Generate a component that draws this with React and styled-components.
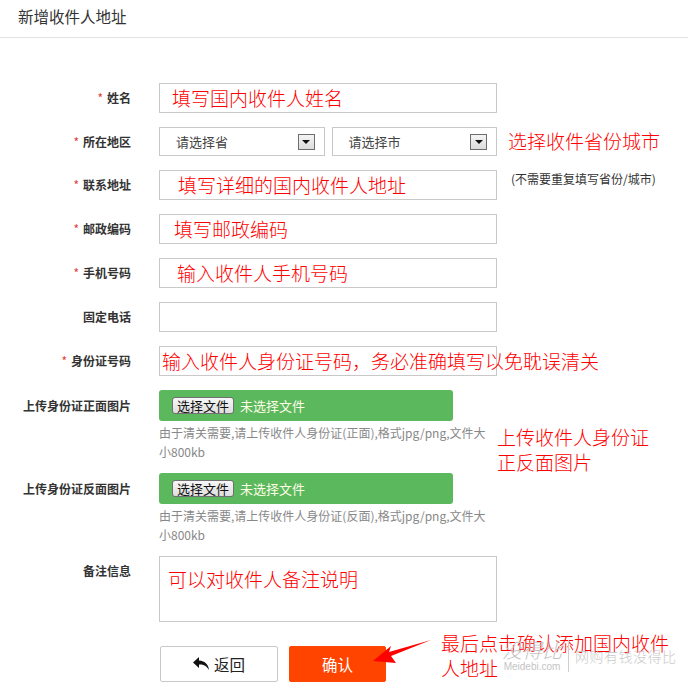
import React from "react";
import styled, { createGlobalStyle } from "styled-components";

const Global = createGlobalStyle`
  html, body { margin: 0; padding: 0; background: #fff; }
  body { font-family: "Noto Sans CJK SC", "Noto Sans", sans-serif; color: #333; }
  * { box-sizing: border-box; }
`;

const Page = styled.div`
  position: relative;
  width: 688px;
  height: 693px;
  overflow: hidden;
`;

const Header = styled.div`
  height: 38px;
  border-bottom: 1px solid #e3e3e3;
  padding-left: 18px;
  font-size: 15.5px;
  line-height: 32px;
  color: #333;
`;

const Form = styled.div`
  padding-top: 45px;
`;

const Row = styled.div`
  display: grid;
  grid-template-columns: 131px 338px;
  column-gap: 28px;
  margin-bottom: ${(p) => p.$gap ?? 14}px;
`;

const Label = styled.div`
  text-align: right;
  font-size: 12px;
  font-weight: 700;
  line-height: ${(p) => p.$lh ?? 30}px;
  color: #333;
  white-space: nowrap;
`;

const Star = styled.span`
  color: #e4393c;
  font-weight: 400;
  margin-right: 4px;
`;

const Field = styled.div`
  height: ${(p) => p.$h ?? 30}px;
  border: 1px solid #c9c9c9;
  padding-left: ${(p) => p.$indent ?? 12}px;
  padding-top: ${(p) => p.$top ?? 0}px;
  font-size: 19px;
  font-weight: 300;
  line-height: ${(p) => p.$lh ?? 28}px;
  color: #ff0000;
  white-space: nowrap;
  overflow: visible;
`;

const Selects = styled.div`
  display: flex;
  gap: 7px;
`;

const Select = styled.div`
  flex: 1;
  height: 29px;
  border: 1px solid #c9c9c9;
  display: flex;
  align-items: center;
  justify-content: space-between;
  padding: 0 9px 0 16px;
  font-size: 13px;
  color: #444;
`;

const Arrow = styled.span`
  width: 17px;
  height: 16px;
  border: 1px solid #6d6d6d;
  background: linear-gradient(#f4f4f4, #dcdcdc);
  display: flex;
  align-items: center;
  justify-content: center;
  &::after {
    content: "";
    border-left: 4px solid transparent;
    border-right: 4px solid transparent;
    border-top: 4px solid #111;
  }
`;

const Upload = styled.div`
  width: 294px;
  height: 31px;
  background: #5cb85c;
  border-radius: 3px;
  display: flex;
  align-items: center;
  gap: 6px;
  padding-left: 13px;
`;

const FileBtn = styled.span`
  height: 17px;
  padding: 0 4px;
  border: 1px solid #707070;
  border-radius: 3px;
  background: linear-gradient(#f7f7f7, #dedede);
  font-size: 13px;
  line-height: 15px;
  color: #111;
`;

const FileName = styled.span`
  font-size: 13px;
  color: #fdfde8;
`;

const Help = styled.div`
  width: 334px;
  margin-top: 2px;
  font-size: 12px;
  line-height: 19px;
  color: #888;
`;

const Buttons = styled.div`
  display: flex;
  gap: 11px;
  padding-left: 1px;
`;

const Btn = styled.div`
  width: ${(p) => p.$w}px;
  height: 36px;
  border-radius: 2px;
  display: flex;
  align-items: center;
  justify-content: center;
  gap: 4px;
  font-size: 15.5px;
  border: 1px solid ${(p) => (p.$primary ? "#ff4400" : "#c9c9c9")};
  background: ${(p) => (p.$primary ? "#ff4400" : "#fff")};
  color: ${(p) => (p.$primary ? "#fff" : "#222")};
`;

const Note = styled.div`
  position: absolute;
  left: ${(p) => p.$x}px;
  top: ${(p) => p.$y}px;
  font-size: ${(p) => p.$size ?? 19}px;
  font-weight: ${(p) => p.$weight ?? 300};
  line-height: ${(p) => p.$lh ?? 25}px;
  color: ${(p) => p.$color ?? "#ff0000"};
  white-space: nowrap;
`;

const Overlay = styled.svg`
  position: absolute;
  left: 0;
  top: 0;
  pointer-events: none;
`;

const Watermark = styled.div`
  position: absolute;
  left: 502px;
  top: 639px;
  display: flex;
  align-items: center;
  gap: 6px;
  color: #c4c4c4;
`;

const WmLogo = styled.div`
  display: flex;
  flex-direction: column;
  align-items: center;
`;

const WmBig = styled.span`
  font-size: 20px;
  line-height: 22px;
  font-style: italic;
  font-weight: 300;
`;

const WmSmall = styled.span`
  font-family: "Liberation Sans", sans-serif;
  font-size: 10px;
  line-height: 11px;
`;

const WmBar = styled.span`
  width: 1px;
  height: 32px;
  background: #cfcfcf;
`;

const WmSlogan = styled.span`
  font-size: 14px;
  letter-spacing: 0.5px;
  font-weight: 300;
  color: #cacaca;
`;

function TextRow({ label, required, text, indent }) {
  return (
    <Row>
      <Label>
        {required && <Star>*</Star>}
        {label}
      </Label>
      <Field $indent={indent}>{text}</Field>
    </Row>
  );
}

function UploadRow({ label, side, gap }) {
  return (
    <Row $gap={gap}>
      <Label $lh={31}>{label}</Label>
      <div>
        <Upload>
          <FileBtn>选择文件</FileBtn>
          <FileName>未选择文件</FileName>
        </Upload>
        <Help>由于清关需要,请上传收件人身份证({side}),格式jpg/png,文件大小800kb</Help>
      </div>
    </Row>
  );
}

export default function App() {
  return (
    <Page>
      <Global />
      <Header>新增收件人地址</Header>
      <Form>
        <TextRow label="姓名" required text="填写国内收件人姓名" indent={12} />
        <Row>
          <Label $lh={29}>
            <Star>*</Star>所在地区
          </Label>
          <Selects>
            <Select>
              请选择省
              <Arrow />
            </Select>
            <Select>
              请选择市
              <Arrow />
            </Select>
          </Selects>
        </Row>
        <TextRow label="联系地址" required text="填写详细的国内收件人地址" indent={18} />
        <TextRow label="邮政编码" required text="填写邮政编码" indent={14} />
        <TextRow label="手机号码" required text="输入收件人手机号码" indent={17} />
        <TextRow label="固定电话" text="" />
        <TextRow
          label="身份证号码"
          required
          text="输入收件人身份证号码，务必准确填写以免耽误清关"
          indent={2}
        />
        <UploadRow label="上传身份证正面图片" side="正面" gap={12} />
        <UploadRow label="上传身份证反面图片" side="反面" gap={12} />
        <Row $gap={24}>
          <Label>备注信息</Label>
          <Field $h={66} $indent={8} $top={9} $lh={26}>
            可以对收件人备注说明
          </Field>
        </Row>
        <Row>
          <div />
          <Buttons>
            <Btn $w={118}>
              <svg width="17" height="14" viewBox="0 0 17 14">
                <path
                  d="M6 0 L0 5.5 L6 11 L6 7.5 C10.5 7.3 13.5 8.8 16 13 C15.4 7.6 12.3 4.2 6 3.6 Z"
                  fill="#111"
                />
              </svg>
              返回
            </Btn>
            <Btn $w={97} $primary>
              确认
            </Btn>
          </Buttons>
        </Row>
      </Form>

      <Note $x={508} $y={128}>选择收件省份城市</Note>
      <Note $x={511} $y={171} $size={12} $weight={400} $lh={16} $color="#333">
        (不需要重复填写省份/城市)
      </Note>
      <Note $x={497} $y={424}>
        上传收件人身份证
        <br />
        正反面图片
      </Note>
      <Note $x={441} $y={630}>
        最后点击确认添加国内收件
        <br />
        人地址
      </Note>

      <Overlay width="688" height="693" viewBox="0 0 688 693">
        <polygon
          points="373,661 391,646 389,652 431,640 391,656 396,663"
          fill="#ff0000"
        />
      </Overlay>

      <Watermark>
        <WmLogo>
          <WmBig>没得比</WmBig>
          <WmSmall>Meidebi.com</WmSmall>
        </WmLogo>
        <WmBar />
        <WmSlogan>网购有钱没得比</WmSlogan>
      </Watermark>
    </Page>
  );
}
